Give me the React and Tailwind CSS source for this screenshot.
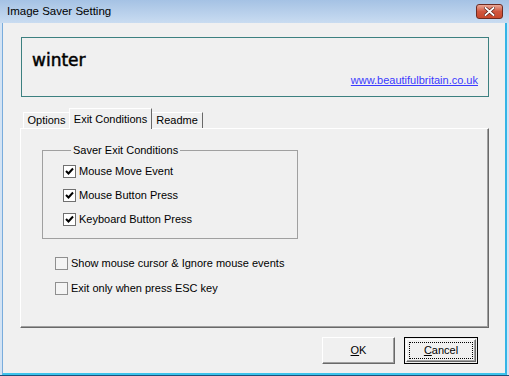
export default function App() {
  const Check = ({ checked, label, flat }) => (
    <div className="flex items-center h-[13px]">
      <div
        className={
          "w-[13px] h-[13px] flex items-center justify-center " +
          (flat
            ? "border border-[#8f8f8f] bg-[#f4f4f4]"
            : "border border-[#707070] bg-white")
        }
      >
        {checked && (
          <svg width="9" height="9" viewBox="0 0 9 9">
            <path d="M1 4 L3.5 6.5 L8 1.5" stroke="#000" strokeWidth="2" fill="none" />
          </svg>
        )}
      </div>
      <span className="ml-[3px] text-[11px] leading-[13px] text-black">{label}</span>
    </div>
  );

  return (
    <div className="w-[509px] h-[376px] flex flex-col overflow-hidden bg-[#bcd3ec] font-['Liberation_Sans',Arial,sans-serif]">
      {/* Title bar */}
      <div className="h-[23px] shrink-0 flex items-center justify-between pl-[7px] pr-[6px] bg-linear-to-b from-[#a5c2e4] to-[#c9dcf1]">
        <span className="text-[11.5px] text-black leading-none">Image Saver Setting</span>
        <div className="w-[27px] h-[15px] rounded-[3px] border border-[#6e2b22] bg-linear-to-b from-[#e9a898] via-[#d0563e] to-[#c8482c] flex items-center justify-center">
          <svg width="11" height="9" viewBox="0 0 11 9">
            <path d="M1.5 1 L9.5 8 M9.5 1 L1.5 8" stroke="#5a1d14" strokeWidth="3.2" strokeLinecap="square" />
            <path d="M1.5 1 L9.5 8 M9.5 1 L1.5 8" stroke="#fff" strokeWidth="1.8" strokeLinecap="square" />
          </svg>
        </div>
      </div>

      {/* Frame */}
      <div className="flex-1 flex flex-col bg-[#d3e3f4] pl-[2px] pr-[2px] border-b border-b-[#1d4f7a]">
        {/* Client area */}
        <div className="flex-1 flex flex-col border-l border-r-[2px] border-b-[2px] border-l-[#79acdc] border-r-[#34b4e6] border-b-[#3cc4ec] bg-[#f0f0f0] pl-[17px] pt-[14px]">
          {/* Header box */}
          <div className="ml-[1px] w-[468px] h-[60px] border border-[#3c8080] flex flex-col px-[10px]">
            <div className="mt-[12px] text-[17px] leading-[20px] font-['DejaVu_Sans',sans-serif] text-black [-webkit-text-stroke:0.5px_black]">winter</div>
            <div className="self-end mt-[4px] text-[11px] leading-[13px] text-[#3a3aff] underline">www.beautifulbritain.co.uk</div>
          </div>

          {/* Tabs */}
          <div className="mt-[11px] h-[20px] flex items-end pl-[3px] relative z-10 text-[11px] text-black">
            <div className="w-[46px] h-[16px] border-l border-t border-white flex items-center justify-center">Options</div>
            <div className="w-[83px] h-[21px] -mb-[1px] bg-[#f0f0f0] border-l border-t border-white border-r border-r-[#696969] flex items-start justify-center pt-[2px]">Exit Conditions</div>
            <div className="w-[51px] h-[16px] border-t border-white border-r border-r-[#696969] flex items-center justify-center">Readme</div>
          </div>

          {/* Panel */}
          <div className="w-[469px] h-[200px] border border-white border-r-[#696969] border-b-[#696969] shadow-[inset_-1px_-1px_0_#a0a0a0] pl-[21px] pt-[15px]">
            <fieldset className="w-[256px] h-[95px] border border-[#a0a0a0] pl-[20px] pt-[8px]">
              <legend className="ml-[8px] px-[2px] text-[11px] leading-[13px] text-black">Saver Exit Conditions</legend>
              <div className="flex flex-col gap-[11px]">
                <Check checked label="Mouse Move Event" />
                <Check checked label="Mouse Button Press" />
                <Check checked label="Keyboard Button Press" />
              </div>
            </fieldset>
            <div className="mt-[18px] ml-[13px] flex flex-col gap-[12px]">
              <Check flat label="Show mouse cursor & Ignore mouse events" />
              <Check flat label="Exit only when press ESC key" />
            </div>
          </div>

          {/* Buttons */}
          <div className="mt-[9px] flex gap-[9px] pl-[302px] text-[11px] text-black">
            <div className="w-[73px] h-[27px] border border-white border-r-[#696969] border-b-[#696969] shadow-[inset_-1px_-1px_0_#a0a0a0] flex items-center justify-center">
              <span><span className="underline">O</span>K</span>
            </div>
            <div className="w-[74px] h-[27px] border border-black p-[1px]">
              <div className="w-full h-full border border-white border-r-[#696969] border-b-[#696969] shadow-[inset_-1px_-1px_0_#a0a0a0] flex items-center justify-center p-[2px]">
                <div className="w-full h-full border border-dotted border-black flex items-center justify-center">
                  <span><span className="underline">C</span>ancel</span>
                </div>
              </div>
            </div>
          </div>
        </div>
      </div>
    </div>
  );
}
